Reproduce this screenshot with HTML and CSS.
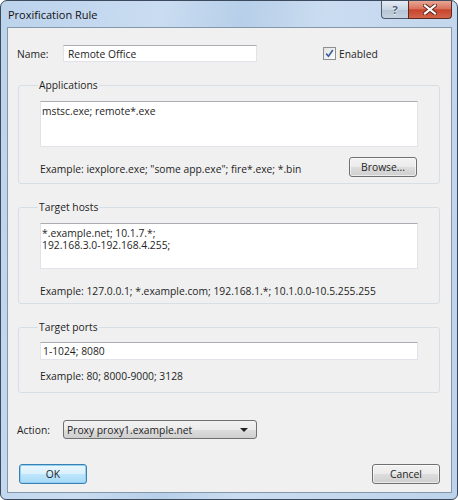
FILE: index.html
```html
<!DOCTYPE html>
<html lang="en">
<head>
    <meta charset="UTF-8">
    <meta name="viewport" content="width=device-width, initial-scale=1.0">
    <title>Proxification Rule</title>
    <link rel="stylesheet" href="styles.css">
</head>
<body>
    <div class="window">
        <div class="titlebar">
            <span class="title">Proxification Rule</span>
            <div class="caption-buttons">
                <span class="cap-btn help">?</span>
                <span class="cap-btn close">
                    <svg width="14" height="11" viewBox="0 0 14 11">
                        <path d="M2 1.5 L12 9.5 M12 1.5 L2 9.5" stroke="#5a2418" stroke-width="4" stroke-linecap="square"/>
                        <path d="M2 1.5 L12 9.5 M12 1.5 L2 9.5" stroke="#fff" stroke-width="2.2" stroke-linecap="square"/>
                    </svg>
                </span>
            </div>
        </div>

        <div class="client">
            <div class="name-row">
                <label class="field-label" for="name">Name:</label>
                <input class="text-input name-input" id="name" value="Remote Office">
                <label class="check">
                    <span class="checkbox">
                        <svg width="9" height="9" viewBox="0 0 9 9">
                            <path d="M1.2 4.6 L3.5 7.2 L7.8 1" fill="none" stroke="#3c5c9c" stroke-width="1.6"/>
                        </svg>
                    </span>
                    Enabled
                </label>
            </div>

            <fieldset class="group">
                <legend>Applications</legend>
                <textarea class="text-area">mstsc.exe; remote*.exe</textarea>
                <div class="example-row">
                    <span class="example">Example: iexplore.exe; "some app.exe"; fire*.exe; *.bin</span>
                    <button class="btn browse">Browse...</button>
                </div>
            </fieldset>

            <fieldset class="group hosts">
                <legend>Target hosts</legend>
                <textarea class="text-area">*.example.net; 10.1.7.*;
192.168.3.0-192.168.4.255;</textarea>
                <div class="example">Example: 127.0.0.1; *.example.com; 192.168.1.*; 10.1.0.0-10.5.255.255</div>
            </fieldset>

            <fieldset class="group ports">
                <legend>Target ports</legend>
                <input class="text-input ports-input" value="1-1024; 8080">
                <div class="example">Example: 80; 8000-9000; 3128</div>
            </fieldset>

            <div class="action-row">
                <span class="field-label">Action:</span>
                <div class="combo">
                    <span>Proxy proxy1.example.net</span>
                    <span class="arrow"></span>
                </div>
            </div>

            <div class="button-row">
                <button class="btn default">OK</button>
                <button class="btn">Cancel</button>
            </div>
        </div>
    </div>
</body>
</html>
```

FILE: styles.css
```css
* {
    box-sizing: border-box;
}

body {
    margin: 0;
    font-family: "Open Sans", "Noto Sans", sans-serif;
    font-size: 10.3px;
    color: #1e1e1e;
    background: #fff;
}

.window {
    width: 458px;
    height: 500px;
    border: 1px solid #3b4a5c;
    border-radius: 7px 7px 6px 6px;
    background: linear-gradient(100deg, #bcd3ec 0%, #c9dcf1 30%, #b7cfe9 45%, #cadcf0 60%, #bdd3eb 100%);
    padding: 0 5px 6px 6px;
    display: flex;
    flex-direction: column;
}

.titlebar {
    height: 26px;
    display: flex;
    justify-content: space-between;
    align-items: flex-start;
}

.title {
    padding: 6px 0 0 1px;
    font-size: 11px;
    color: #111;
}

.caption-buttons {
    display: flex;
}

.cap-btn {
    height: 18px;
    display: flex;
    align-items: center;
    justify-content: center;
    border: 1px solid #4d5a6b;
    border-top: none;
}

.cap-btn.help {
    width: 27px;
    border-radius: 0 0 0 4px;
    border-right: none;
    background: linear-gradient(#e3ebf4, #c8d5e3 50%, #b5c4d5 51%, #c3d1df);
    color: #4c5c70;
    font-weight: bold;
    font-size: 11px;
    text-shadow: 0 1px 0 #fff;
}

.cap-btn.close {
    width: 44px;
    border-radius: 0 0 4px 0;
    border-color: #5e2a20;
    background: linear-gradient(#e8a696, #d9735e 45%, #c7452c 52%, #d3644b);
}

.client {
    flex: 1;
    border: 1px solid #8597ab;
    background: #f0f0f0;
    padding: 0 11px 0 9px;
    display: flex;
    flex-direction: column;
}

.field-label {
    width: 46px;
}

.name-row {
    margin-top: 17px;
    display: flex;
    align-items: center;
}

.text-input {
    height: 17px;
    border: 1px solid #e2e3ea;
    border-top-color: #abadb3;
    background: #fff;
    font: inherit;
    color: inherit;
    padding: 0 4px;
    outline: none;
}

.name-input {
    width: 194px;
}

.check {
    margin-left: 66px;
    display: flex;
    align-items: center;
    gap: 3px;
}

.checkbox {
    width: 13px;
    height: 13px;
    border: 1px solid #8e8f8f;
    background: linear-gradient(135deg, #e2e2e2, #fcfcfc);
    display: flex;
    align-items: center;
    justify-content: center;
}

.group {
    margin: 15px 0 0 1px;
    padding: 8px 21px 6px;
    border: 1px solid #d5dfe5;
    border-radius: 3px;
    min-width: 0;
}

.group legend {
    padding: 0 1px;
    margin-left: -2px;
    line-height: 16px;
}

.text-area {
    display: block;
    width: 100%;
    height: 46px;
    border: 1px solid #e2e3ea;
    border-top-color: #abadb3;
    background: #fff;
    font: inherit;
    color: inherit;
    line-height: 12px;
    padding: 3px 1px;
    resize: none;
    overflow: hidden;
    outline: none;
}

.example-row {
    margin-top: 10px;
    display: flex;
    justify-content: space-between;
    align-items: flex-end;
}

.example {
    line-height: 16px;
}

.hosts .example {
    margin-top: 14px;
}

.hosts {
    padding-bottom: 4px;
}

.ports-input {
    width: 100%;
    height: 18px;
    padding: 0 2px;
}

.ports .example {
    margin-top: 8px;
}

.ports {
    padding-top: 7px;
    padding-bottom: 8px;
}

.btn {
    height: 20px;
    width: 68px;
    border: 1px solid #707070;
    border-radius: 3px;
    background: linear-gradient(#f2f2f2, #ebebeb 50%, #dddddd 51%, #cfcfcf);
    font: inherit;
    color: inherit;
    padding: 0;
    box-shadow: inset 0 0 0 1px rgba(255, 255, 255, 0.6);
}

.btn.browse {
    margin-right: 1px;
}

.btn.default {
    margin-left: 2px;
    border-color: #3c7fb1;
    background: linear-gradient(#eaf6fd, #d9f0fc 50%, #bee6fd 51%, #a7d9f5);
    box-shadow: inset 0 0 0 1px #8fd0f4;
}

.action-row {
    margin-top: 27px;
    display: flex;
    align-items: center;
}

.combo {
    width: 194px;
    height: 19px;
    border: 1px solid #707070;
    border-radius: 3px;
    background: linear-gradient(#f2f2f2, #ebebeb 50%, #dddddd 51%, #cfcfcf);
    display: flex;
    align-items: center;
    justify-content: space-between;
    padding: 0 8px 0 3px;
}

.arrow {
    width: 0;
    height: 0;
    border-left: 4px solid transparent;
    border-right: 4px solid transparent;
    border-top: 4px solid #222;
}

.button-row {
    margin-top: 25px;
    display: flex;
    justify-content: space-between;
}
```
